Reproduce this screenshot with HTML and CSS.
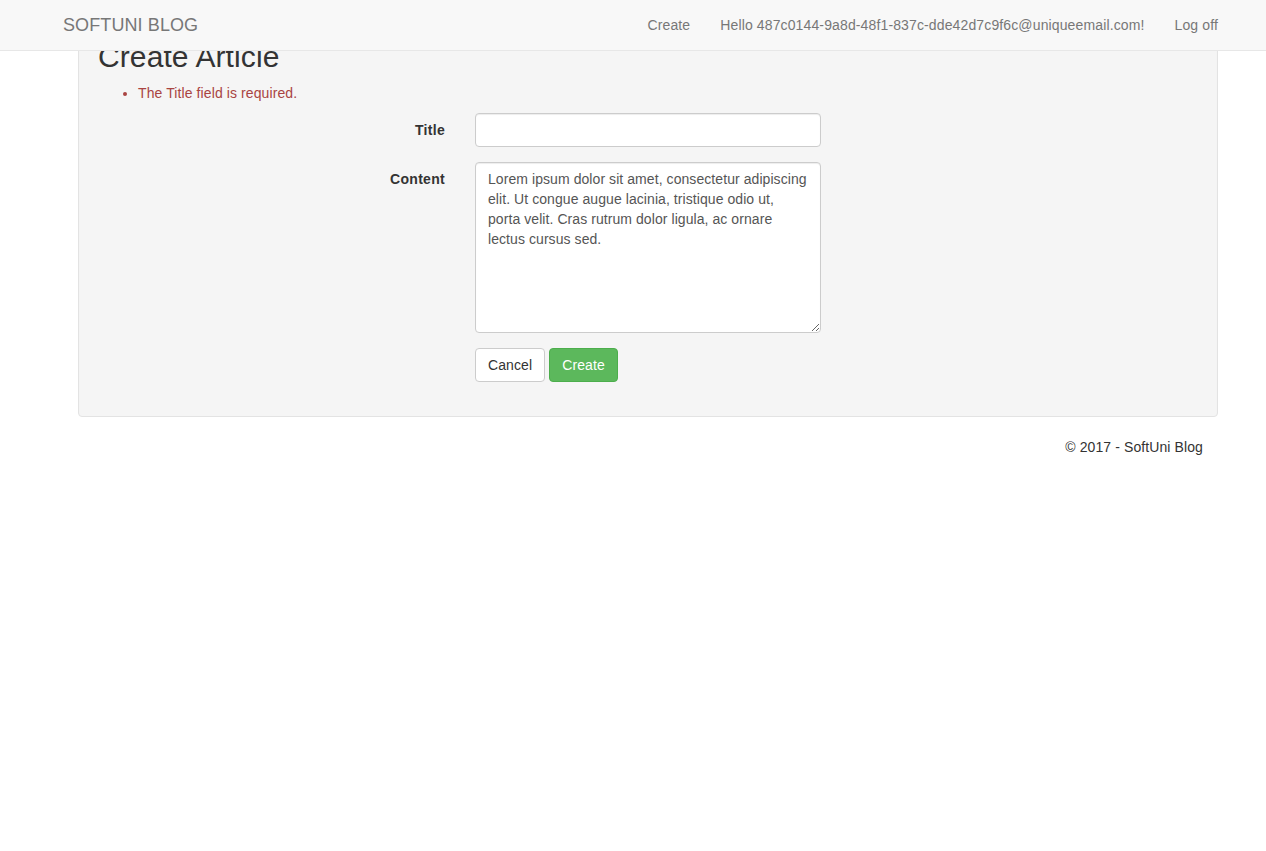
FILE: index.html
```html
<!DOCTYPE html>
<html lang="en">
<head>
<meta charset="utf-8">
<title>Create Article - SoftUni Blog</title>
<link rel="stylesheet" href="styles.css">
</head>
<body>
<nav class="navbar">
  <div class="navbar-inner">
    <a class="brand" href="#">SOFTUNI BLOG</a>
    <ul class="nav-right">
      <li><a href="#">Create</a></li>
      <li><a href="#">Hello 487c0144-9a8d-48f1-837c-dde42d7c9f6c@uniqueemail.com!</a></li>
      <li><a href="#">Log off</a></li>
    </ul>
  </div>
</nav>
<main class="container">
  <div class="well">
    <h2 class="title">Create Article</h2>
    <ul class="errors">
      <li>The Title field is required.</li>
    </ul>
    <form class="form">
      <div class="form-group">
        <label class="label" for="title">Title</label>
        <input class="control" id="title" type="text">
      </div>
      <div class="form-group">
        <label class="label" for="content">Content</label>
        <textarea class="control textarea" id="content">Lorem ipsum dolor sit amet, consectetur adipiscing elit. Ut congue augue lacinia, tristique odio ut, porta velit. Cras rutrum dolor ligula, ac ornare lectus cursus sed.</textarea>
      </div>
      <div class="form-group">
        <span></span>
        <div class="actions">
          <a class="btn btn-default" href="#">Cancel</a>
          <button class="btn btn-success" type="button">Create</button>
        </div>
      </div>
    </form>
  </div>
  <footer class="footer">
    <p>&copy; 2017 - SoftUni Blog</p>
  </footer>
</main>
</body>
</html>
```

FILE: styles.css
```css
* { box-sizing: border-box; }

html, body {
  margin: 0;
  padding: 0;
  background: #fff;
  font-family: "Liberation Sans", Arial, Helvetica, sans-serif;
  font-size: 14px;
  line-height: 20px;
  letter-spacing: 0.1px;
  color: #333;
}

a { text-decoration: none; }

.navbar {
  position: fixed;
  top: 0;
  left: 0;
  right: 0;
  z-index: 10;
  height: 51px;
  background: #f8f8f8;
  border-bottom: 1px solid #e7e7e7;
}

.navbar-inner {
  width: 1170px;
  margin: 0 auto;
  padding: 0 15px;
  display: flex;
  justify-content: space-between;
  align-items: flex-start;
}

.brand {
  display: block;
  margin-left: -15px;
  padding: 15px;
  font-size: 18px;
  line-height: 20px;
  color: #777;
}

.nav-right {
  display: flex;
  list-style: none;
  margin: 0 -30px 0 0;
  padding: 0;
}

.nav-right a {
  display: block;
  padding: 15px;
  line-height: 20px;
  letter-spacing: 0.13px;
  color: #777;
}

.container {
  width: 1170px;
  margin: 0 auto;
  padding: 0 15px;
}

.well {
  margin: 0 -15px 20px 15px;
  padding: 19px;
  background: #f5f5f5;
  border: 1px solid #e3e3e3;
  border-radius: 4px;
  box-shadow: inset 0 1px 1px rgba(0, 0, 0, 0.05);
}

.title {
  margin: 20px 0 10px;
  font-size: 30px;
  font-weight: 500;
  line-height: 33px;
  letter-spacing: 0.1px;
  color: #333;
}

.errors {
  margin: 0 0 10px;
  padding-left: 40px;
  color: #a94442;
}

.form { margin: 0; }

.form-group {
  display: grid;
  grid-template-columns: 347px 346px;
  column-gap: 30px;
  margin-bottom: 15px;
}

.label {
  padding-top: 7px;
  text-align: right;
  font-weight: bold;
  letter-spacing: 0.3px;
  color: #333;
}

.control {
  display: block;
  width: 346px;
  height: 34px;
  padding: 6px 12px;
  font-family: inherit;
  font-size: 14px;
  line-height: 20px;
  letter-spacing: 0.07px;
  color: #555;
  background: #fff;
  border: 1px solid #ccc;
  border-radius: 4px;
  box-shadow: inset 0 1px 1px rgba(0, 0, 0, 0.075);
  margin: 0;
}

.textarea {
  height: 171px;
  resize: vertical;
}

.actions {
  display: flex;
  gap: 4px;
}

.btn {
  display: inline-block;
  padding: 6px 12px;
  font-family: inherit;
  font-size: 14px;
  line-height: 20px;
  letter-spacing: 0.1px;
  border: 1px solid transparent;
  border-radius: 4px;
  cursor: pointer;
  margin: 0;
}

.btn-default {
  color: #333;
  background: #fff;
  border-color: #ccc;
}

.btn-success {
  color: #fff;
  background: #5cb85c;
  border-color: #4cae4c;
}

.footer {
  display: flex;
  justify-content: flex-end;
}

.footer p {
  margin: 0 0 10px;
}
```
